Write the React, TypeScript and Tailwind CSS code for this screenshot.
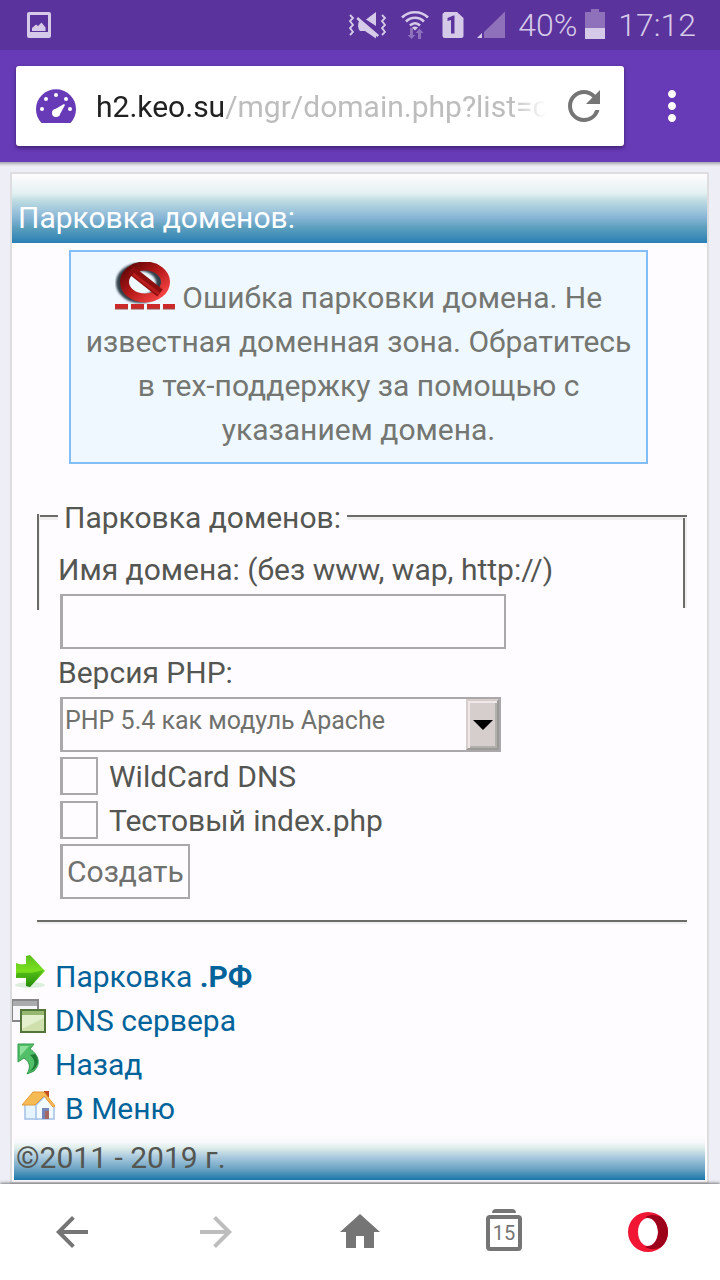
import React, { useState } from "react";
import { MdArrowBack, MdArrowForward, MdMoreVert, MdRefresh } from "react-icons/md";

// Status bar icons
const VibrateIcon = () => (
  <svg width="40" height="32" viewBox="0 0 40 32" fill="none" aria-hidden="true">
    <path
      d="M2 6l3 3-3 3 3 4-3 3 3 4-3 3M34 6l3 3-3 3 3 4-3 3 3 4-3 3"
      stroke="#d6cae9"
      strokeWidth="1.8"
    />
    <path d="M28 3v14L18 10.500z" fill="#d6cae9" />
    <path d="M10 8l21 18-1.500 2L28 27v2.500L17 22h-5c-2-2-2.500-7-1-9.500L8.500 10z" fill="#d6cae9" />
  </svg>
);

const WifiIcon = () => (
  <svg width="28" height="32" viewBox="0 0 28 32" fill="none" aria-hidden="true">
    <path
      d="M1 8.500c7-7 19-7 26 0M5 12.500c5-5 13-5 18 0M9 16.500c3-3 7-3 10 0"
      stroke="#d6cae9"
      strokeWidth="2.600"
    />
    <path d="M11 18.500c2-1.500 4-1.500 6 0l-3 3z" fill="#d6cae9" />
    <path d="M9 19h3v7h2.500L10.500 30 6.500 26H9zM17 30v-6h-2.500l4-4.500 4 4.500H20v6z" fill="#8e70bb" />
  </svg>
);

const SimIcon = () => (
  <svg width="22" height="32" viewBox="0 0 22 32" aria-hidden="true">
    <path d="M2.500 3H15l6.500 6v17.500a2.500 2.500 0 0 1-2.500 2.500H3a2.500 2.500 0 0 1-2.500-2.500V5z" fill="#d6cae9" />
    <path d="M12.500 6.500v18H9V11l-3.500 1V9l6-2.500z" fill="#5b339c" />
  </svg>
);

const SignalIcon = () => (
  <svg width="28" height="32" viewBox="0 0 28 32" aria-hidden="true">
    <path d="M7 29V23L28 2.500V29z" fill="#8e70bb" />
    <path d="M0 29l5-5v5z" fill="#d6cae9" />
  </svg>
);

const BatteryIcon = () => (
  <svg width="20" height="32" viewBox="0 0 20 32" aria-hidden="true">
    <path d="M0 3h6V0h8v3h6v16H0z" fill="#8e70bb" />
    <path d="M0 19h20v11H0z" fill="#d6cae9" />
  </svg>
);

const PictureIcon = () => (
  <svg width="24" height="26" viewBox="0 0 24 26" aria-hidden="true">
    <path
      fillRule="evenodd"
      d="M2 0h20a2 2 0 0 1 2 2v22a2 2 0 0 1-2 2H2a2 2 0 0 1-2-2V2a2 2 0 0 1 2-2zm1 3v17h18V3z"
      fill="#d6cae9"
    />
    <path d="M5 19v-3l4-3.500 2 1.500 3.500-3.500 4 5V19z" fill="#d6cae9" />
  </svg>
);

const GaugeIcon = () => (
  <svg width="40" height="34" viewBox="0 0 40 34" className="shrink-0" aria-hidden="true">
    <path d="M5.500 34a20 20 0 1 1 29 0z" fill="#673ab7" />
    <g fill="#fff">
      <circle cx="20" cy="6" r="2" />
      <circle cx="10" cy="10" r="2" />
      <circle cx="30" cy="10" r="2" />
      <circle cx="6" cy="20" r="2" />
      <circle cx="34" cy="20" r="2" />
      <circle cx="20" cy="24" r="4" />
      <path d="M16.800 21.500L28 15l1 1-6 11z" />
    </g>
  </svg>
);

// Page icons
const ErrorIcon = () => (
  <svg
    width="60"
    height="48"
    viewBox="0 0 60 48"
    className="-mb-0.5 inline-block align-baseline"
    role="img"
    aria-label="Ошибка"
  >
    <defs>
      <linearGradient id="ring" x1="0" y1="0" x2="1" y2="1">
        <stop offset="0" stopColor="#5d0505" />
        <stop offset=".5" stopColor="#b81a1a" />
        <stop offset="1" stopColor="#ff4a4a" />
      </linearGradient>
      <filter id="soft" x="-20%" y="-20%" width="140%" height="140%">
        <feGaussianBlur stdDeviation="1" />
      </filter>
    </defs>
    <ellipse cx="25" cy="21" rx="20" ry="16" fill="none" stroke="#30404a" strokeWidth="8" filter="url(#soft)" />
    <ellipse cx="30" cy="20" rx="20.500" ry="16" fill="none" stroke="url(#ring)" strokeWidth="9" />
    <path d="M16 8l29 23" stroke="#8c0e0e" strokeWidth="9" />
    <path d="M18 12l26 20" stroke="#b81c1c" strokeWidth="3" />
    <path d="M0 44.500h60" stroke="#cc2a28" strokeWidth="5" strokeDasharray="13 3" />
    <path d="M0 47h60" stroke="#9a4a48" strokeWidth="1" strokeDasharray="13 3" />
  </svg>
);

const ArrowIcon = () => (
  <svg width="34" height="34" viewBox="0 0 34 34" aria-hidden="true">
    <defs>
      <linearGradient id="arrow" x1="0" y1="0" x2="0" y2="1">
        <stop offset="0" stopColor="#5cbf1c" />
        <stop offset=".5" stopColor="#7be01e" />
        <stop offset="1" stopColor="#157a08" />
      </linearGradient>
    </defs>
    <ellipse cx="18" cy="30" rx="15" ry="3" fill="#dcefdc" />
    <path d="M4 8c4 2 8 1 10 1V1l4-1 15 16-15 16-4-1v-8H4z" fill="url(#arrow)" />
    <path d="M4 22l1-4h14l13-3-14 16-4-1v-8z" fill="#2f9f0d" opacity=".5" />
  </svg>
);

const WindowsIcon = () => (
  <svg width="34" height="34" viewBox="0 0 34 34" aria-hidden="true">
    <path d="M0 1h26v21H0z" fill="#f7f7f9" stroke="#868689" strokeWidth="2" />
    <path d="M1 2h24v5H1z" fill="#aaabad" />
    <path d="M9 11h24v22H9z" fill="#e4efcd" stroke="#53743a" strokeWidth="2" />
    <path d="M10 12h22v4H10z" fill="#95b86e" />
    <path d="M10 30l12-6 10-5v13H10z" fill="#cfe0ac" />
  </svg>
);

const ReturnIcon = () => (
  <svg width="34" height="34" viewBox="0 0 34 34" aria-hidden="true">
    <path
      d="M6 1h16l-4 5c9 6 11 15 4 22l-7 3c4-7 3-12-3-16l-6 4z"
      fill="#52c069"
      stroke="#31994a"
      strokeWidth="1"
    />
    <path d="M8 3h9L8 13z" fill="#8fe09c" />
    <path d="M18 12c6 5 6 11-1 17l5-3c5-5 5-10 1-15z" fill="#1f7d38" />
  </svg>
);

const HouseIcon = () => (
  <svg width="34" height="34" viewBox="0 0 34 34" aria-hidden="true">
    <path d="M3 17h12v15H3z" fill="#e6f4fd" stroke="#a3c0e6" strokeWidth="1.500" />
    <path d="M14 18l9-9 9 10v13H14z" fill="#f3fafe" stroke="#a3c0e6" strokeWidth="1.500" />
    <path d="M22 4h5v7l-5-4z" fill="#c44c20" />
    <path d="M0 18L11 5h11l11 14-2 1-9-11-9 9z" fill="#f6bb55" stroke="#e59a3a" strokeWidth="1" />
    <path d="M20 21h7v11h-7z" fill="#7486b8" />
    <path d="M23 24h4v8h-4z" fill="#a86660" />
  </svg>
);

interface PageLink {
  name: React.ReactNode;
  href: string;
  icon: React.ComponentType;
  className: string;
}

const PAGE_LINKS: PageLink[] = [
  { name: <>Парковка <b>.РФ</b></>, href: "#rf", icon: ArrowIcon, className: "" },
  { name: "DNS сервера", href: "#dns", icon: WindowsIcon, className: "" },
  { name: "Назад", href: "#back", icon: ReturnIcon, className: "" },
  { name: "В Меню", href: "#menu", icon: HouseIcon, className: "pl-2.5" }
];

function StatusBar() {
  return (
    <div className="flex h-[50px] items-center justify-between bg-[#5b339c] pr-6 pl-[27px] text-[32px] leading-none font-light text-[#d6cae9]">
      <PictureIcon />
      <div className="flex items-center gap-[13px]">
        <VibrateIcon />
        <WifiIcon />
        <SimIcon />
        <SignalIcon />
        <div className="flex items-center gap-2">
          <span>40%</span>
          <BatteryIcon />
        </div>
        <span>17:12</span>
      </div>
    </div>
  );
}

function AddressBar() {
  return (
    <header className="flex h-28 items-center bg-[#673ab7] pl-4">
      <div className="flex h-20 flex-1 items-center rounded-[3px] bg-white pr-4 pl-5 shadow-[0_2px_4px_rgba(0,0,0,0.4)]">
        <GaugeIcon />
        <button
          type="button"
          aria-label="Адрес страницы"
          className="ml-5 w-0 flex-1 overflow-hidden pt-0.5 text-left text-[30px] leading-10 whitespace-nowrap text-[#bdbdbd] [mask-image:linear-gradient(90deg,#000_415px,transparent_450px)]"
        >
          <span className="text-[#212121]">h2.keo.su</span>/mgr/domain.php?list=c
        </button>
        <button type="button" aria-label="Обновить" className="ml-1 text-[#757575]">
          <MdRefresh size={48} />
        </button>
      </div>
      <button type="button" aria-label="Меню" className="flex w-24 justify-center text-white">
        <MdMoreVert size={48} />
      </button>
    </header>
  );
}

function ParkingForm() {
  const [domain, setDomain] = useState("");
  const [php, setPhp] = useState("5.4");

  return (
    <form onSubmit={(e) => e.preventDefault()}>
      <fieldset className="relative mt-[34px] mr-5 ml-[25px] border-y-2 border-[#6b6b68] pb-[21px] pl-[21px] shadow-[inset_0_3px_0_#eeefee,0_2px_0_#eeefee]">
        <legend className="bg-[#fffcff] px-1.5 pt-1 leading-8">Парковка доменов:</legend>
        {/* short side rails */}
        <span className="absolute -top-5 left-0 h-24 w-[3px] border-l-2 border-[#6b6b68] bg-[#eeefee]" />
        <span className="absolute -top-4 right-0 h-[90px] w-1 border-l-2 border-[#6b6b68] bg-[#eeefee]" />

        <div className="flex flex-col items-start pt-3">
          <label htmlFor="domain" className="leading-[48px]">
            Имя домена: (без www, wap, http://)
          </label>
          <input
            id="domain"
            type="text"
            value={domain}
            onChange={(e) => setDomain(e.target.value)}
            className="ml-0.5 h-[55px] w-[446px] max-w-full border-2 border-l-[3px] border-[#aaa8ab] px-1 outline-none"
          />
          <label htmlFor="php" className="leading-[48px]">
            Версия PHP:
          </label>
          <div className="relative ml-0.5 w-[441px] max-w-full">
            <select
              id="php"
              value={php}
              onChange={(e) => setPhp(e.target.value)}
              className="block h-[55px] w-full appearance-none border-2 border-l-[3px] border-[#aaa8ab] bg-transparent pr-10 pb-2 pl-0.5 text-[25px] text-[#6f716d] outline-none"
            >
              <option value="5.4">PHP 5.4 как модуль Apache</option>
            </select>
            <span className="pointer-events-none absolute inset-y-0.5 right-0.5 flex w-[33px] items-center justify-center border-2 border-t-[#d6cdcd] border-r-[#9c9a96] border-b-[#9c9a96] border-l-[#d6cdcd] bg-[#d6cdcd] shadow-[inset_2px_2px_0_#f0e8e8,inset_-2px_-2px_0_#b3afac]">
              <svg width="20" height="10" viewBox="0 0 20 10" aria-hidden="true">
                <path d="M0 0h20L10 10z" />
              </svg>
            </span>
          </div>
          <div className="mt-0.5 ml-0.5 flex flex-col">
            <label className="flex h-11 items-center gap-[11px]">
              <input type="checkbox" className="size-[38px] appearance-none border-2 border-l-[3px] border-[#aaa8ab] checked:bg-[#aaa8ab]" />
              WildCard DNS
            </label>
            <label className="flex h-11 items-center gap-[11px]">
              <input type="checkbox" className="size-[38px] appearance-none border-2 border-l-[3px] border-[#aaa8ab] checked:bg-[#aaa8ab]" />
              Тестовый index.php
            </label>
          </div>
          <button type="submit" className="mt-0.5 ml-0.5 h-[55px] border-2 border-l-[3px] border-[#aaa8ab] px-1 text-[#6f716d]">
            Создать
          </button>
        </div>
      </fieldset>
    </form>
  );
}

function BottomBar() {
  return (
    <nav className="grid h-24 grid-cols-5 place-items-center bg-white text-[#757575] shadow-[0_-1px_3px_rgba(0,0,0,0.5)]">
      <button type="button" aria-label="Назад">
        <MdArrowBack size={48} />
      </button>
      <button type="button" aria-label="Вперёд" className="text-[#bdbdbd]">
        <MdArrowForward size={48} />
      </button>
      <button type="button" aria-label="Домой">
        <svg width="48" height="48" viewBox="0 0 48 48" fill="currentColor" aria-hidden="true">
          <path d="M24 6L4 24h6v16h10V28h8v12h10V24h6z" />
        </svg>
      </button>
      <button type="button" aria-label="Вкладки" className="flex flex-col items-center gap-0.5 pb-1">
        <span className="h-1 w-6 rounded-t-sm bg-[#757575]" />
        <span className="flex size-9 items-center justify-center rounded-sm border-4 border-[#757575] text-xl leading-none">15</span>
      </button>
      <button type="button" aria-label="Opera">
        <svg width="40" height="40" viewBox="0 0 40 40" aria-hidden="true">
          <path
            fillRule="evenodd"
            d="M20 0a20 20 0 1 0 0 40 20 20 0 0 0 0-40zm0 6c5.500 0 10 6.300 10 14s-4.500 14-10 14-10-6.300-10-14S14.500 6 20 6z"
            fill="#f01634"
          />
          <path
            d="M17 5.500C20 3 25 2 33 4.800A20 20 0 0 1 33.300 35C26 38.500 21 37.500 17 34.500c1 .300 2-.500 3-.500 5.500 0 10-6.300 10-14S25.500 6 20 6c-1 0-2-.500-3-.500z"
            fill="#9c001a"
          />
        </svg>
      </button>
    </nav>
  );
}

export default function App() {
  return (
    <div className="flex min-h-screen flex-col bg-[#eeeef7] font-[Roboto,'Liberation_Sans',sans-serif]">
      <StatusBar />
      <AddressBar />
      <main className="flex flex-1 flex-col pt-2.5 pr-[11px] pl-2.5 text-[30px] text-[#545652] shadow-[inset_0_6px_3px_-4px_rgba(0,0,0,0.3)]">
        <div className="flex-1 border-2 border-[#dddddf] bg-[#fffcff]">
          <h1 className="bg-[linear-gradient(#fffcff,#e3f0f2_28%,#bfdde3_38%,#86b4d6_64%,#5b9fbd_78%,#2a7fb5)] pt-[22px] pb-[3px] pl-1.5 leading-[44px] text-white">
            Парковка доменов:
          </h1>

          <p className="mt-[7px] mr-[59px] ml-[57px] border-2 border-[#82bdf5] bg-[#eff8ff] px-3 py-2.5 text-center leading-[44px] text-[#747671]">
            <ErrorIcon /> Ошибка парковки домена. Не известная доменная зона. Обратитесь в тех-поддержку за помощью с
            указанием домена.
          </p>

          <ParkingForm />

          <ul className="mt-[33px]">
            {PAGE_LINKS.map((link) => {
              const IconComponent = link.icon;
              return (
                <li key={link.href} className={link.className}>
                  <a href={link.href} className="flex h-11 w-fit items-start gap-[9px] leading-[44px] text-[#00639a]">
                    <IconComponent />
                    <span>{link.name}</span>
                  </a>
                </li>
              );
            })}
          </ul>

          <footer className="mx-0.5 mt-[5px] mb-0.5 bg-[linear-gradient(#fffcff,#f5f8fb_15%,#dcebe8_28%,#a9c9de_48%,#6ba3c3_75%,#1a77a9)] pl-0.5 leading-[44px]">
            ©2011 - 2019 г.
          </footer>
        </div>
      </main>
      <BottomBar />
    </div>
  );
}
